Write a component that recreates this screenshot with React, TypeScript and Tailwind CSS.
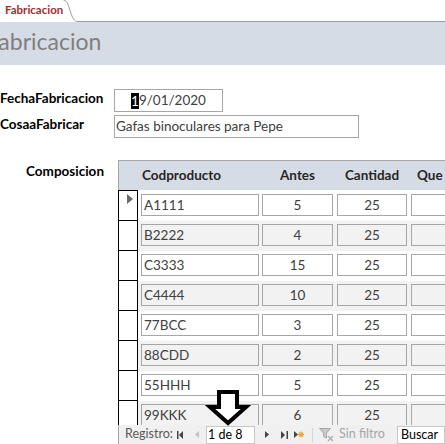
import React from "react"

const rows = [
  { cod: "A1111", antes: 5, cantidad: 25 },
  { cod: "B2222", antes: 4, cantidad: 25 },
  { cod: "C3333", antes: 15, cantidad: 25 },
  { cod: "C4444", antes: 10, cantidad: 25 },
  { cod: "77BCC", antes: 3, cantidad: 25 },
  { cod: "88CDD", antes: 2, cantidad: 25 },
  { cod: "55HHH", antes: 5, cantidad: 25 },
  { cod: "99KKK", antes: 6, cantidad: 25 },
]

function TabCurve() {
  return (
    <svg width="15" height="22" viewBox="0 0 15 22" className="shrink-0">
      <path d="M0.5 0 C4.5 0.5 5.5 6 7.5 12 C9.5 18 11 21.5 15 21.5" fill="none" stroke="#9a9ca1" strokeWidth="1" />
    </svg>
  )
}

function NavFirst() {
  return (
    <svg width="7" height="8" viewBox="0 0 7 8">
      <rect x="0" y="0" width="1.5" height="8" fill="#444" />
      <path d="M6 0 L2 4 L6 8 Z" fill="#444" />
    </svg>
  )
}

function NavPrev() {
  return (
    <svg width="4" height="7" viewBox="0 0 4 7">
      <path d="M4 0 L0 3.5 L4 7 Z" fill="#c2c2c2" />
    </svg>
  )
}

function NavNext() {
  return (
    <svg width="4" height="7" viewBox="0 0 4 7">
      <path d="M0 0 L4 3.5 L0 7 Z" fill="#444" />
    </svg>
  )
}

function NavLast() {
  return (
    <svg width="7" height="8" viewBox="0 0 7 8">
      <path d="M0 0 L4 4 L0 8 Z" fill="#444" />
      <rect x="5.5" y="0" width="1.5" height="8" fill="#444" />
    </svg>
  )
}

function NavNew() {
  return (
    <svg width="10" height="9" viewBox="0 0 10 9">
      <path d="M0 1 L4 4.5 L0 8 Z" fill="#444" />
      <g stroke="#f0a431" strokeWidth="1.2">
        <line x1="7" y1="1.5" x2="7" y2="7.5" />
        <line x1="4" y1="4.5" x2="10" y2="4.5" />
        <line x1="5" y1="2.5" x2="9" y2="6.5" />
        <line x1="9" y1="2.5" x2="5" y2="6.5" />
      </g>
    </svg>
  )
}

function FilterIcon() {
  return (
    <svg width="16" height="14" viewBox="0 0 16 14">
      <path d="M0.5 0.5 H11.5 L7.5 5 V10 L4.5 8.5 V5 Z" fill="#c8c8c8" stroke="#a8a8a8" strokeWidth="1" />
      <g stroke="#b0b0b0" strokeWidth="1.4">
        <line x1="9" y1="8" x2="14" y2="13" />
        <line x1="14" y1="8" x2="9" y2="13" />
      </g>
    </svg>
  )
}

function Cell({ children, w, center, bg }: { children?: React.ReactNode; w: string; center?: boolean; bg: string }) {
  return (
    <div
      className={`${w} ${bg} ${center ? "justify-center" : "pl-[2px]"} mt-[3px] flex h-[22px] shrink-0 items-center border border-[#a6a6a6] text-[#404040]`}
    >
      {children}
    </div>
  )
}

export default function App() {
  return (
    <div className="relative h-[444px] w-[445px] overflow-hidden bg-white font-['Lato','Noto_Sans',sans-serif] text-[13.5px] text-black">
      {/* tab strip */}
      <div className="flex h-[22px]">
        <div className="w-[63px] shrink-0 whitespace-nowrap pl-[5px] text-[11.5px] font-bold leading-[20px] text-[#a8282e]">
          Fabricacion
        </div>
        <TabCurve />
        <div className="flex-1 border-b border-[#9a9ca1]" />
      </div>

      {/* form header */}
      <div className="h-[43px] overflow-hidden bg-[#d6dce5]">
        <div className="-ml-[13px] whitespace-nowrap text-[23px] leading-[38px] text-[#7f7f7f]">Fabricacion</div>
      </div>

      {/* fields */}
      <div className="pt-[24px]">
        <div className="flex h-[23px] items-start">
          <div className="w-[114px] shrink-0 font-bold leading-[18px]">FechaFabricacion</div>
          <div className="flex h-[23px] w-[109px] items-center justify-center border border-[#a6a6a6] text-[#404040]">
            <span className="bg-black leading-[16px] text-white">1</span>
            <span>9/01/2020</span>
          </div>
        </div>
        <div className="mt-[3px] flex h-[23px] items-start">
          <div className="w-[114px] shrink-0 font-bold leading-[18px]">CosaaFabricar</div>
          <div className="flex h-[23px] w-[245px] items-center border border-[#a6a6a6] pl-[1px] text-[#404040]">
            Gafas binoculares para Pepe
          </div>
        </div>
      </div>

      {/* subform */}
      <div className="mt-[22px] flex">
        <div className="w-[118px] shrink-0 pr-[14px] pt-[1px] text-right font-bold leading-[20px]">Composicion</div>
        <div className="flex h-[284px] flex-1 flex-col overflow-hidden border-t border-[#a6a6a6]">
          <div className="flex h-[29px] shrink-0 items-center border-l border-[#a6a6a6] bg-[#d6dce5] font-bold text-[#262626]">
            <div className="w-[22px] shrink-0" />
            <div className="w-[118px] shrink-0 pl-[1px]">Codproducto</div>
            <div className="ml-[3px] w-[71px] shrink-0 text-center">Antes</div>
            <div className="ml-[4px] w-[70px] shrink-0 text-center">Cantidad</div>
            <div className="ml-[4px] shrink-0 whitespace-nowrap pl-[6px]">Que</div>
          </div>

          <div className="flex-1 overflow-hidden">
            {rows.map((r, i) => {
              const bg = i % 2 === 1 ? "bg-[#f2f2f2]" : "bg-white"
              return (
                <div key={r.cod} className={`flex ${i === 0 ? "h-[31px]" : "h-[30px]"}`}>
                  <div
                    className={`w-[20px] shrink-0 border-x border-b border-black bg-white ${i === 0 ? "border-t" : ""}`}
                  >
                    {i === 0 && (
                      <svg width="7" height="10" viewBox="0 0 7 10" className="ml-[8px] mt-[3px]">
                        <path d="M0 0 L6 5 L0 10 Z" fill="#6b6b6b" />
                      </svg>
                    )}
                  </div>
                  <div className={`flex flex-1 items-start ${bg}`}>
                    <div className={`flex ${i === 0 ? "mt-[1px]" : ""}`}>
                      <div className="w-[3px] shrink-0" />
                      <Cell w="w-[118px]" bg={bg}>{r.cod}</Cell>
                      <div className="w-[3px] shrink-0" />
                      <Cell w="w-[71px]" center bg={bg}>{r.antes}</Cell>
                      <div className="w-[4px] shrink-0" />
                      <Cell w="w-[70px]" center bg={bg}>{r.cantidad}</Cell>
                      <div className="w-[4px] shrink-0" />
                      <Cell w="w-[70px]" bg={bg} />
                    </div>
                  </div>
                </div>
              )
            })}
          </div>

          {/* navigation bar */}
          <div className="flex h-[19px] shrink-0 items-center border-l border-[#a6a6a6] bg-[#f0f0f0] text-[12.5px]">
            <div className="w-[58px] shrink-0 pl-[6px] text-[#595959]">Registro:</div>
            <div className="flex w-[12px] shrink-0 items-center"><NavFirst /></div>
            <div className="flex w-[17px] shrink-0 items-center pl-[6px]"><NavPrev /></div>
            <div className="flex h-[18px] w-[49px] shrink-0 items-center self-end border border-[#c8c8c8] bg-white pl-[1px] text-black">
              1 de 8
            </div>
            <div className="flex w-[21px] shrink-0 items-center pl-[10px]"><NavNext /></div>
            <div className="flex w-[15px] shrink-0 items-center pl-[5px]"><NavLast /></div>
            <div className="flex w-[21px] shrink-0 items-center pl-[3px]"><NavNew /></div>
            <div className="h-[14px] w-px shrink-0 bg-[#d4d4d4]" />
            <div className="flex w-[26px] shrink-0 items-center pl-[6px]"><FilterIcon /></div>
            <div className="w-[58px] shrink-0 text-[#a6a6a6]">Sin filtro</div>
            <div className="flex h-[18px] flex-1 items-center self-end border border-[#c8c8c8] bg-white pl-[3px] text-black">
              Buscar
            </div>
          </div>
        </div>
      </div>

      {/* annotation arrow */}
      <svg
        width="46"
        height="38"
        viewBox="0 0 46 38"
        className="absolute left-[205px] top-[388px]"
      >
        <path d="M14 4 H32 V19 H41 L23 35 L5 19 H14 Z" fill="white" stroke="black" strokeWidth="4" strokeLinejoin="miter" />
      </svg>
    </div>
  )
}
